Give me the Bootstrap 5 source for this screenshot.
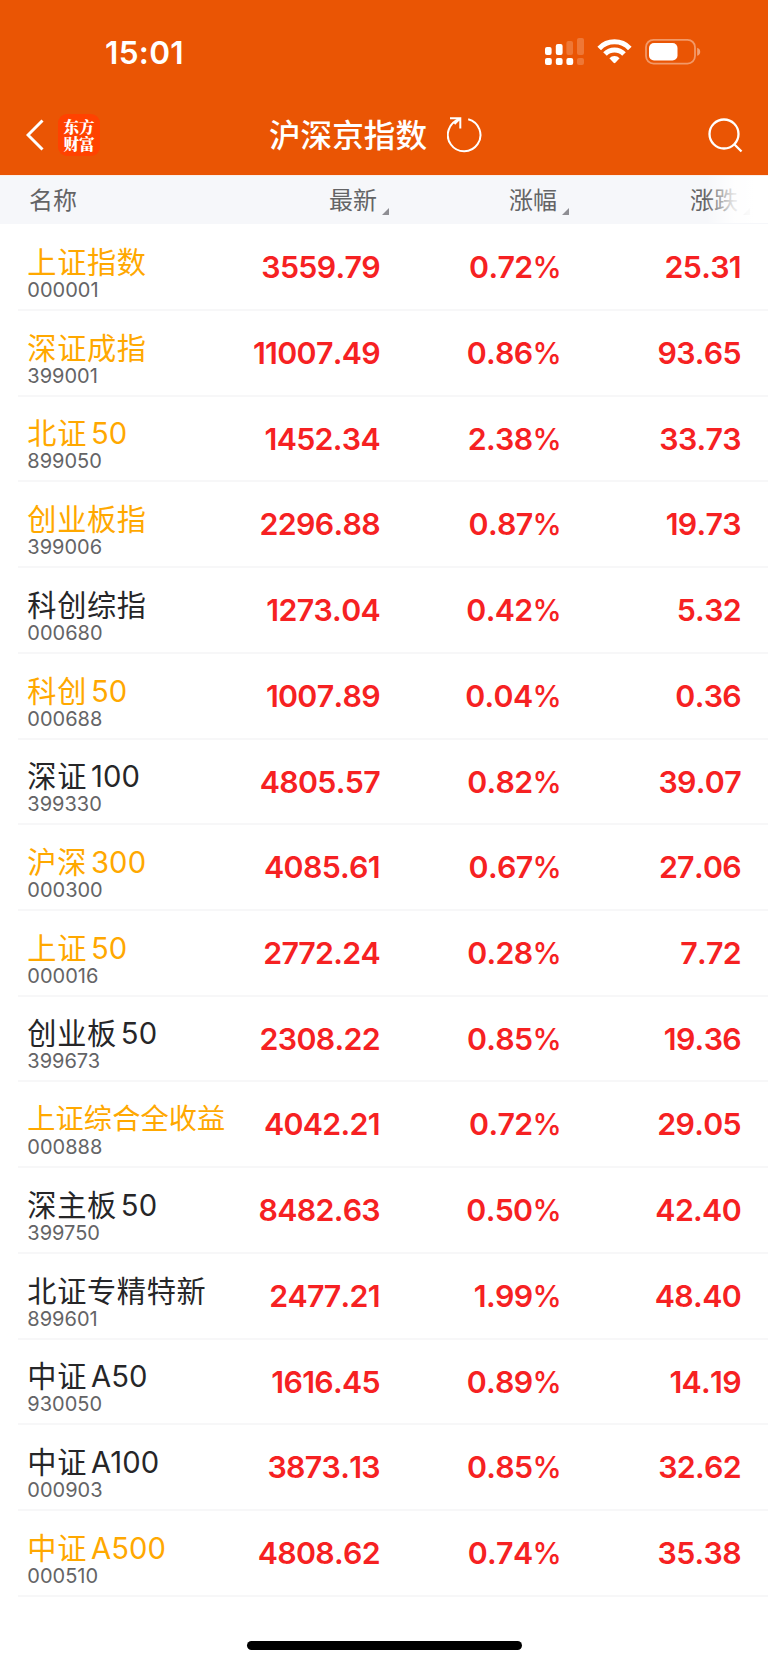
<!DOCTYPE html>
<html lang="zh-CN">
<head>
<meta charset="utf-8">
<meta name="viewport" content="width=device-width, initial-scale=1">
<title>沪深京指数</title>
<link href="https://cdn.jsdelivr.net/npm/bootstrap@5.3.0/dist/css/bootstrap.min.css" rel="stylesheet">
<style>
body{font-family:Inter,"Noto Sans CJK SC",sans-serif;background:#fff;color:#262628;height:1665px;overflow:hidden}
.topbar{background:#ea5504;height:174.6px;color:#fff}
.status{height:105px;padding:1px 67px 0 105px}
.clock{font-size:31.6px;font-weight:600;line-height:1;letter-spacing:.3px;font-kerning:none}
.titlebar{display:grid;grid-template-columns:243px 1fr 36px;align-items:center;height:60px;padding:0 25px 0 26px}
.back{margin-right:14px}
.app-logo{width:42px;height:42px;border-radius:9px;background:#ff4200;font:900 15.6px/17px "Noto Serif CJK SC","Noto Sans CJK SC",serif;text-align:center;padding-top:4px}
.page-title{font-size:31.6px;font-weight:500;line-height:40px;padding-top:2px;margin-right:20px}
.quote-grid{display:grid;grid-template-columns:230px 150px 180px 181px}
.head{height:49.7px;background:#f6f7fa;border-top:1px solid #fbeee8;color:#646466;font-size:24px;position:relative}
.head>div{line-height:50px}
.head-name{padding-left:29px}
.sort{position:relative;padding-right:3px}
.sort::after{content:"";position:absolute;left:calc(100% + 2px);top:32px;border-left:7px solid transparent;border-bottom:7px solid #8e8e93}
.fade-edge{position:absolute;right:0;top:0;width:62px;height:47px;background:linear-gradient(90deg,rgba(255,255,255,0),rgba(255,255,255,.85) 45%,#fff 80%)}
.quote{height:85.72px;position:relative}
.quote::after{content:"";position:absolute;left:18px;right:0;bottom:-1px;height:2px;background:#f7f7f8}
.label{padding:22.7px 0 0 27.3px;white-space:nowrap}
.iname{font-size:29.2px;line-height:31px;height:31px;letter-spacing:.65px}
.iname.long{font-size:28.2px;letter-spacing:.1px}
.iname span{margin-left:4px;letter-spacing:.1px}
.gold{color:#ffa800}
.code{font-size:20px;line-height:25.500px;color:#646466;letter-spacing:0}
.num{font-size:30.3px;font-weight:600;line-height:87.5px;color:#f62122;text-align:right;letter-spacing:-.65px;font-kerning:none}
.pct{font-size:29.4px;font-weight:500;margin-right:-1px}
.home-bar{width:275px;height:9px;margin:45px auto 0}
</style>
</head>
<body>
<header class="topbar">
  <div class="status d-flex align-items-center justify-content-between">
    <div class="clock">15:01</div>
    <svg width="157" height="30" viewBox="0 0 157 30" fill="#fff">
      <rect x="1" y="9" width="6.6" height="8" rx="2"/><rect x="11.8" y="6" width="6.8" height="11" rx="2"/>
      <g opacity=".2"><rect x="22.4" y="3" width="6.6" height="14" rx="2"/><rect x="33" y="0" width="7" height="17" rx="2"/><rect x="33" y="20" width="7" height="7" rx="2"/></g>
      <rect x="1" y="20" width="6.8" height="7" rx="2"/><rect x="11.8" y="20" width="6.8" height="7" rx="2"/><rect x="22.4" y="20" width="6.8" height="7" rx="2"/>
      <g fill="none" stroke="#fff" stroke-width="5"><path d="M55.2 10.4a21.2 21.2 0 0 1 30.6 0"/><path d="M61 16.1a13.2 13.2 0 0 1 19 0"/></g>
      <path d="M65.4 20.3a7 7 0 0 1 10.2 0l-4.2 4.4q-.9.9-1.8 0z"/>
      <rect x="102" y="1.8" width="49" height="23.8" rx="7.5" fill="none" stroke="#fff" stroke-opacity=".4" stroke-width="1.8"/>
      <rect x="105" y="5" width="28.5" height="17.4" rx="5"/><path d="M153.2 9.7q3 1 3 4t-3 4z" opacity=".45"/>
    </svg>
  </div>
  <div class="titlebar">
    <div class="d-flex align-items-center">
      <svg class="back" width="18" height="32" viewBox="0 0 18 32" fill="none" stroke="#fff" stroke-width="3"><path d="M16.5 1.5 2 16l14.5 14.5"/></svg>
      <div class="app-logo">东方<br>财富</div>
    </div>
    <div class="d-flex align-items-center">
      <div class="page-title">沪深京指数</div>
      <svg width="36" height="36" viewBox="0 0 36 36" fill="none" stroke="#fff" stroke-width="2"><path d="M21.2 2.2A16.3 16.3 0 1 1 12.7 2.300M3 1.2h10.3v10.3M13 1.5 7.5 7"/></svg>
    </div>
    <svg width="36" height="36" viewBox="0 0 36 36" fill="none" stroke="#fff" stroke-width="2.3"><circle cx="17" cy="17" r="14.5"/><path d="m27 27 7.5 7.5"/></svg>
  </div>
</header>
<main>
  <div class="head quote-grid text-end">
    <div class="head-name text-start">名称</div><div class="sort">最新</div><div class="sort">涨幅</div><div class="sort">涨跌</div>
    <div class="fade-edge"></div>
  </div>
  <div id="quotes"></div>
  <div class="home-bar bg-black rounded-pill"></div>
</main>
<script>
const quotes = [
  ['上证指数','','000001','3559.79','0.72','25.31',1],
  ['深证成指','','399001','11007.49','0.86','93.65',1],
  ['北证','50','899050','1452.34','2.38','33.73',1],
  ['创业板指','','399006','2296.88','0.87','19.73',1],
  ['科创综指','','000680','1273.04','0.42','5.32',0],
  ['科创','50','000688','1007.89','0.04','0.36',1],
  ['深证','100','399330','4805.57','0.82','39.07',0],
  ['沪深','300','000300','4085.61','0.67','27.06',1],
  ['上证','50','000016','2772.24','0.28','7.72',1],
  ['创业板','50','399673','2308.22','0.85','19.36',0],
  ['上证综合全收益','','000888','4042.21','0.72','29.05',1],
  ['深主板','50','399750','8482.63','0.50','42.40',0],
  ['北证专精特新','','899601','2477.21','1.99','48.40',0],
  ['中证','A50','930050','1616.45','0.89','14.19',0],
  ['中证','A100','000903','3873.13','0.85','32.62',0],
  ['中证','A500','000510','4808.62','0.74','35.38',1]
];
document.getElementById('quotes').innerHTML = quotes.map(([name, suffix, code, last, pct, chg, gold]) => `
  <div class="quote quote-grid">
    <div class="label"><div class="iname ${gold ? 'gold' : ''} ${name.length > 6 ? 'long' : ''}">${name}${suffix ? `<span>${suffix}</span>` : ''}</div><div class="code">${code}</div></div>
    <div class="num">${last}</div><div class="num">${pct}<span class="pct">%</span></div><div class="num">${chg}</div>
  </div>`).join('');
</script>
<script src="https://cdn.jsdelivr.net/npm/bootstrap@5.3.0/dist/js/bootstrap.bundle.min.js"></script>
</body>
</html>
